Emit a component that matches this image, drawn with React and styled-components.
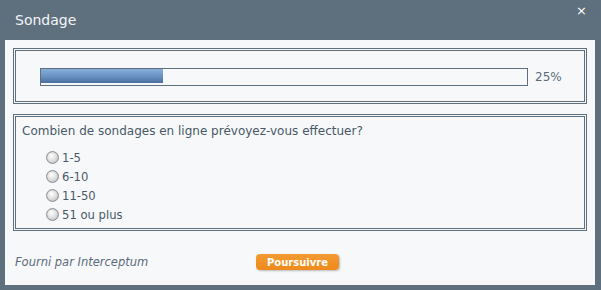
import React from "react";
import styled, { createGlobalStyle } from "styled-components";

const GlobalStyle = createGlobalStyle`
  html, body {
    margin: 0;
    padding: 0;
    background: #5e707e;
  }
  body {
    font-family: "DejaVu Sans", Verdana, sans-serif;
  }
`;

const Dialog = styled.div`
  width: 601px;
  height: 290px;
  box-sizing: border-box;
  padding: 0 6px 5px 5px;
  display: flex;
  flex-direction: column;
  background: #5e707e;
`;

const TitleBar = styled.div`
  position: relative;
  height: 40px;
  display: flex;
  align-items: center;
  padding-left: 10px;
  color: #f2f5f8;
  font-size: 14px;

  .close {
    position: absolute;
    top: 3px;
    right: 8px;
    font-size: 13px;
    color: #ffffff;
  }
`;

const Panel = styled.div`
  flex: 1;
  background: #f6f8fa;
  padding: 8px 8px 0 8px;
  display: flex;
  flex-direction: column;
`;

const Frame = styled.div`
  border: 3px double #5e707e;
  margin-bottom: ${(p) => p.gap || 0}px;
`;

const ProgressRow = styled.div`
  display: flex;
  align-items: center;
  padding: 17px 0 15px 24px;
  gap: 7px;
`;

const Track = styled.div`
  width: 488px;
  height: 18px;
  box-sizing: border-box;
  border: 1px solid #5e707e;
  background: #f6f8fa;
  padding-bottom: 2px;
`;

const Fill = styled.div`
  height: 100%;
  background: linear-gradient(#86b0da, #6790c1 55%, #4c6f9d);
`;

const Percent = styled.span`
  font-size: 12px;
  color: #5a6c7c;
`;

const QuestionBody = styled.div`
  padding: 6px 6px 4px 6px;
  color: #4a5866;
`;

const Question = styled.div`
  font-size: 12px;
  line-height: 16px;
  margin-bottom: 9px;
`;

const Options = styled.div`
  display: flex;
  flex-direction: column;
  padding-left: 24px;
  font-size: 11.6px;
`;

const Option = styled.label`
  display: flex;
  align-items: center;
  height: 19px;
  gap: 3px;
`;

const Radio = styled.span`
  width: 13px;
  height: 13px;
  box-sizing: border-box;
  border-radius: 50%;
  border: 1px solid #8e9296;
  background: radial-gradient(circle at 40% 35%, #ffffff, #dcdcdc 55%, #b4b6b8);
  box-shadow: inset 0 0 1px #9a9a9a;
`;

const Footer = styled.div`
  flex: 1;
  display: flex;
  align-items: center;
  padding: 8px 0 0 2px;
`;

const Credit = styled.span`
  width: 241px;
  font-style: italic;
  font-size: 11.5px;
  color: #5d6c7a;
`;

const Button = styled.button`
  width: 83px;
  height: 16px;
  padding: 0;
  border: none;
  border-radius: 4px;
  background: linear-gradient(#f39a33, #ee8a1a);
  box-shadow: 1px 1px 2px rgba(0, 0, 0, 0.25);
  color: #ffffff;
  font-family: "DejaVu Sans", Verdana, sans-serif;
  font-weight: bold;
  font-size: 10px;
`;

const options = ["1-5", "6-10", "11-50", "51 ou plus"];

export default function App() {
  return (
    <>
      <GlobalStyle />
      <Dialog>
        <TitleBar>
          Sondage
          <span className="close">×</span>
        </TitleBar>
        <Panel>
          <Frame gap={10}>
            <ProgressRow>
              <Track>
                <Fill style={{ width: "25%" }} />
              </Track>
              <Percent>25%</Percent>
            </ProgressRow>
          </Frame>
          <Frame>
            <QuestionBody>
              <Question>
                Combien de sondages en ligne prévoyez-vous effectuer?
              </Question>
              <Options>
                {options.map((o) => (
                  <Option key={o}>
                    <Radio />
                    {o}
                  </Option>
                ))}
              </Options>
            </QuestionBody>
          </Frame>
          <Footer>
            <Credit>Fourni par Interceptum</Credit>
            <Button>Poursuivre</Button>
          </Footer>
        </Panel>
      </Dialog>
    </>
  );
}
